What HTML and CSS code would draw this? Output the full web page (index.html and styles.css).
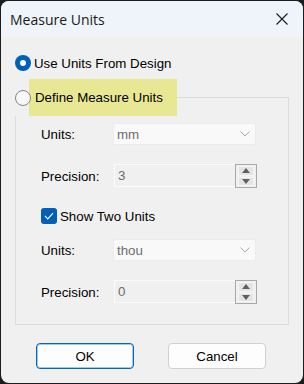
FILE: index.html
```html
<!DOCTYPE html>
<html lang="en">
<head>
    <meta charset="UTF-8">
    <title>Measure Units</title>
    <link rel="stylesheet" href="styles.css">
</head>
<body>
    <div class="window">
        <div class="titlebar">
            <span class="title">Measure Units</span>
            <svg class="close" width="12" height="12" viewBox="0 0 12 12">
                <path d="M0.5 0.5 L11.5 11.5 M11.5 0.5 L0.5 11.5" stroke="#1a1a1a" stroke-width="1.1" fill="none"/>
            </svg>
        </div>
        <div class="content">
            <div class="option">
                <span class="radio checked"></span>
                <span>Use Units From Design</span>
            </div>
            <fieldset class="group">
                <legend class="group-legend">
                    <span class="radio"></span>
                    <span class="highlight">Define Measure Units</span>
                </legend>

                <div class="field first">
                    <span class="label">Units:</span>
                    <div class="combo">
                        <span>mm</span>
                        <svg width="10" height="6" viewBox="0 0 10 6"><polyline points="0.5,0.5 5,5 9.5,0.5" stroke="#a8a8a8" fill="none"/></svg>
                    </div>
                </div>
                <div class="field spaced">
                    <span class="label">Precision:</span>
                    <div class="spin">
                        <div class="spin-text">3</div>
                        <div class="spin-buttons">
                            <span class="spin-btn"><svg width="8" height="5" viewBox="0 0 8 5"><polygon points="0,5 8,5 4,0" fill="#606060"/></svg></span>
                            <span class="spin-btn"><svg width="8" height="5" viewBox="0 0 8 5"><polygon points="0,0 8,0 4,5" fill="#606060"/></svg></span>
                        </div>
                    </div>
                </div>

                <div class="check-row">
                    <span class="check">
                        <svg width="10" height="8" viewBox="0 0 10 8"><polyline points="1,4 3.8,6.8 9,1.2" stroke="#fff" stroke-width="1.2" fill="none"/></svg>
                    </span>
                    <span>Show Two Units</span>
                </div>

                <div class="field after-check">
                    <span class="label">Units:</span>
                    <div class="combo">
                        <span>thou</span>
                        <svg width="10" height="6" viewBox="0 0 10 6"><polyline points="0.5,0.5 5,5 9.5,0.5" stroke="#a8a8a8" fill="none"/></svg>
                    </div>
                </div>
                <div class="field spaced">
                    <span class="label">Precision:</span>
                    <div class="spin">
                        <div class="spin-text">0</div>
                        <div class="spin-buttons">
                            <span class="spin-btn"><svg width="8" height="5" viewBox="0 0 8 5"><polygon points="0,5 8,5 4,0" fill="#606060"/></svg></span>
                            <span class="spin-btn"><svg width="8" height="5" viewBox="0 0 8 5"><polygon points="0,0 8,0 4,5" fill="#606060"/></svg></span>
                        </div>
                    </div>
                </div>
            </fieldset>

            <div class="buttons">
                <button class="btn default">OK</button>
                <button class="btn">Cancel</button>
            </div>
        </div>
    </div>
</body>
</html>
```

FILE: styles.css
```css
body {
    margin: 0;
    padding: 1px;
    background-color: #1c1c1c;
    font-family: "Liberation Sans", Arial, sans-serif;
    font-size: 13.3px;
    color: #000;
}
.window {
    width: 302px;
    height: 382px;
    background-color: #f0f0f0;
    border-radius: 8px;
    overflow: hidden;
}
.titlebar {
    height: 36px;
    background-color: #eef4f9;
    display: flex;
    align-items: center;
    justify-content: space-between;
    padding: 0 15px 0 9px;
}
.title {
    font-family: "Open Sans", "Noto Sans", sans-serif;
    font-size: 14px;
    color: #1a1a1a;
}
.content {
    padding: 18px 14px 0 14px;
}
.option {
    display: flex;
    align-items: center;
    gap: 3px;
    height: 16px;
}
.radio {
    position: relative;
    width: 16px;
    height: 16px;
    box-sizing: border-box;
    border-radius: 50%;
    border: 1px solid #858585;
    background-color: #f7f7f7;
    flex-shrink: 0;
}
.radio.checked {
    border: none;
    background-color: #005fb8;
    display: flex;
    align-items: center;
    justify-content: center;
}
.radio.checked::after {
    content: "";
    width: 6px;
    height: 6px;
    border-radius: 50%;
    background-color: #fff;
}
.group {
    margin: 8px 0 0 0;
    padding: 0 0 20px 25px;
    border: 1px solid #dcdcdc;
    min-inline-size: 0;
}
.group-legend {
    display: flex;
    align-items: center;
    margin-left: -26px;
    padding: 0;
}
.highlight {
    margin-left: -2px;
    width: 148px;
    height: 37px;
    box-sizing: border-box;
    padding-left: 6px;
    display: flex;
    align-items: center;
    background-color: #e8e894;
}
.field {
    display: flex;
    align-items: center;
}
.field.first {
    margin-top: 7px;
}
.field.spaced {
    margin-top: 19px;
}
.field.after-check {
    margin-top: 15px;
}
.label {
    width: 72px;
    flex-shrink: 0;
}
.combo {
    width: 143px;
    height: 22px;
    box-sizing: border-box;
    background-color: #f9f9f9;
    border: 1px solid #ececec;
    border-radius: 2px;
    display: flex;
    align-items: center;
    justify-content: space-between;
    padding: 0 5px 0 3px;
    color: #6d6d6d;
}
.spin {
    display: flex;
    width: 143px;
    height: 24px;
    margin-left: 1px;
}
.spin-text {
    flex: 1;
    height: 23px;
    box-sizing: border-box;
    border: 1px solid #fbfbfb;
    border-right: none;
    padding: 0 3px;
    display: flex;
    align-items: center;
    color: #6d6d6d;
}
.spin-buttons {
    width: 22px;
    box-sizing: border-box;
    border: 1px solid #a8a8a8;
    padding: 1px 2px;
    display: flex;
    flex-direction: column;
    gap: 1px;
}
.spin-btn {
    flex: 1;
    background-color: #e4e4e4;
    border: 1px solid #f4f4f4;
    display: flex;
    align-items: center;
    justify-content: center;
}
.check-row {
    display: flex;
    align-items: center;
    gap: 3px;
    height: 16px;
    margin-top: 20px;
}
.check {
    width: 16px;
    height: 16px;
    border-radius: 3px;
    background-color: #005fb8;
    display: flex;
    align-items: center;
    justify-content: center;
}
.buttons {
    display: flex;
    gap: 34px;
    margin: 18px 0 0 21px;
}
.btn {
    width: 98px;
    height: 26px;
    border: 1px solid #d0d0d0;
    border-radius: 4px;
    background-color: #fdfdfd;
    font-family: "Liberation Sans", Arial, sans-serif;
    font-size: 13.3px;
    color: #000;
    padding: 0;
}
.btn.default {
    border: 1px solid #0067c0;
    box-shadow: inset 0 0 0 1px rgba(0, 103, 192, 0.35);
}
```
